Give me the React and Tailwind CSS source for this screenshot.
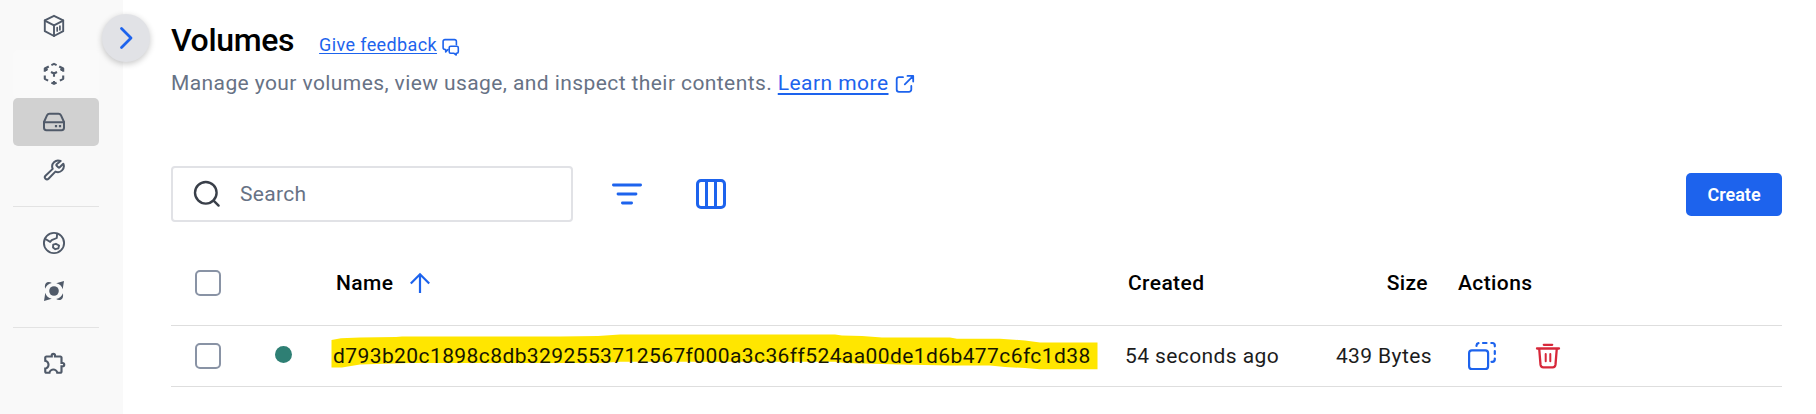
import React from "react";
import { MdOutlineExtension } from "react-icons/md";

const line = {
  fill: "none",
  stroke: "currentColor",
  strokeLinecap: "round",
  strokeLinejoin: "round",
};

function ContainersIcon() {
  return (
    <svg viewBox="0 0 24 24" className="size-6" {...line} strokeWidth="1.9">
      <path d="M12 1.800 21.200 6.400V17.200L12 22 2.800 17.200V6.400Z" />
      <path d="M2.800 6.600 12 11.400 21.200 6.600M12 11.400V22" />
      <path d="M15.200 13.600V17M17.900 12.200V15.800" strokeWidth="1.700" />
    </svg>
  );
}

function ImagesIcon() {
  return (
    <svg viewBox="0 0 24 24" className="size-6" {...line} strokeWidth="2.100" strokeLinecap="butt">
      <path d="M9.400 3.100 12 1.900l2.600 1.200M17.200 4.500l4 2v3.200M2.800 9.700V6.500l4-2M2.800 13.500v3.300l3.300 1.900M21.200 13.500v3.300l-3.300 1.900M9.400 20.600 12 21.900l2.600-1.300M12 19v2.500M18.400 8 21 6.600M5.600 8 3 6.600" />
      <path d="M9 10 12 11.500l3-1.500M12 11.500v3.200" />
    </svg>
  );
}

function VolumesIcon() {
  return (
    <svg viewBox="0 0 24 24" className="size-6" {...line} strokeWidth="2">
      <path d="M2 12 5.100 5.200A2.600 2.600 0 0 1 7.400 3.800h9.200a2.600 2.600 0 0 1 2.300 1.400L22 12v5.800a2.400 2.400 0 0 1-2.400 2.400H4.400A2.400 2.400 0 0 1 2 17.800Z" />
      <path d="M2 12.300h20" />
      <path d="M14 16.200h.01M18 16.200h.01" strokeWidth="2.200" strokeLinecap="square" />
    </svg>
  );
}

function BuildsIcon() {
  return (
    <svg viewBox="0 0 24 24" className="size-6" {...line} strokeWidth="2">
      <path d="M14.700 6.300a1 1 0 0 0 0 1.400l1.600 1.600a1 1 0 0 0 1.400 0l3.600-3.600a6 6 0 0 1-7.900 7.900l-6.900 7.200a2.100 2.100 0 0 1-3-3l7.200-6.900a6 6 0 0 1 7.900-7.900z" />
    </svg>
  );
}

function GlobeIcon() {
  return (
    <svg viewBox="0 0 24 24" className="size-6" {...line} strokeWidth="1.900">
      <circle cx="12" cy="12" r="10.100" />
      <path d="M3 7.800 8.200 10.900l1.500-1.700 5.100-2.200.3-4.300" />
      <path d="m11.200 13.700 2.700-.9 3.200 1.700-.8 2.900-3 .8-2.300-1.800Z" />
    </svg>
  );
}

function ScoutIcon() {
  return (
    <svg viewBox="0 0 24 24" className="size-6" fill="currentColor">
      <circle cx="12" cy="12" r="4.800" />
      <path d="M22 2 20.700 10.300A8.400 8.400 0 0 0 14.200 4.200Z" />
      <path d="M2 22 3.300 13.700A8.400 8.400 0 0 0 9.800 19.800Z" />
      <path d="M3.100 9.800A9 9 0 0 1 9.800 4Q7.700 2.400 5.100 3.200 2.100 5 3.100 9.800Z" />
      <path d="M20.900 14.200a9 9 0 0 1-6.700 5.800q2.100 1.600 4.700.8 3-1.800 2-6.600Z" />
    </svg>
  );
}

function NavItem({ children, className = "" }) {
  return (
    <a className={`flex h-12 w-[86px] shrink-0 items-center rounded-[5px] pl-[29px] ${className}`}>
      {children}
    </a>
  );
}

function Sidebar() {
  return (
    <nav className="flex w-[123px] shrink-0 flex-col bg-[#f9f9f9] pt-0.5 pl-[13px] text-[#505a69]">
      <NavItem><ContainersIcon /></NavItem>
      <NavItem className="bg-[#fafafa]"><ImagesIcon /></NavItem>
      <NavItem className="bg-[#d1d1d1]"><VolumesIcon /></NavItem>
      <NavItem><BuildsIcon /></NavItem>
      <hr className="mt-3 mb-3 w-[86px] border-[#e3e3e3]" />
      <NavItem><GlobeIcon /></NavItem>
      <NavItem><ScoutIcon /></NavItem>
      <hr className="mt-3 mb-3 w-[86px] border-[#e3e3e3]" />
      <NavItem><MdOutlineExtension className="-mt-0.5 size-[26px]" /></NavItem>
    </nav>
  );
}

function Heading() {
  return (
    <header>
      <div className="flex h-10 items-end">
        <h1 className="text-[32px] leading-10 font-medium tracking-[-0.350px] text-black">Volumes</h1>
        <a className="ml-[25px] flex items-center gap-[5px] text-[18px] leading-[31px] tracking-[0.380px] text-[#1d63ed]">
          <span className="underline decoration-1 underline-offset-2">Give feedback</span>
          <svg viewBox="0 0 18 18" className="mt-1 size-[18px]" {...line} strokeWidth="1.600">
            <path d="M6 11.500 3.700 14V11.500H3A1.900 1.900 0 0 1 1.100 9.600V3.500A1.900 1.900 0 0 1 3 1.600h9.500a1.900 1.900 0 0 1 1.900 1.900v3.300" />
            <path d="M8.700 8.200h6.100a1.500 1.500 0 0 1 1.500 1.500v4a1.500 1.500 0 0 1-1.500 1.500h-.6V17l-2.500-1.800h-3a1.500 1.500 0 0 1-1.500-1.500v-4a1.500 1.500 0 0 1 1.500-1.500Z" />
          </svg>
        </a>
      </div>
      <p className="mt-2 flex h-8 items-center text-[21px] tracking-[0.410px] whitespace-nowrap text-[#677285]">
        <span className="whitespace-pre">Manage your volumes, view usage, and inspect their contents. </span>
        <a className="flex items-center gap-1.5 text-[#1d63ed]">
          <span className="tracking-[0.450px] underline decoration-2 underline-offset-[3px]">Learn more</span>
          <svg viewBox="0 0 20 20" className="size-5" {...line} strokeWidth="1.800">
            <path d="M8 3.200H4A2.300 2.300 0 0 0 1.700 5.500v10A2.300 2.300 0 0 0 4 17.800h10a2.300 2.300 0 0 0 2.300-2.300V12" />
            <path d="M12.500 1.900h5.700v5.700M18 2.100 9.800 10.300" />
          </svg>
        </a>
      </p>
    </header>
  );
}

function Toolbar() {
  return (
    <div className="flex h-14 items-center">
      <div className="flex h-14 w-[402px] items-center rounded border-2 border-[#e1e2e6] pl-5">
        <svg viewBox="0 0 28 28" className="size-7 text-[#393f49]" {...line} strokeWidth="2.400">
          <circle cx="12.800" cy="12.800" r="10.800" />
          <path d="m20.600 20.600 5 5" />
        </svg>
        <span className="mt-0.5 ml-[19px] text-[21px] tracking-[0.300px] text-[#677285]">Search</span>
      </div>
      <svg viewBox="0 0 32 32" className="ml-[38px] size-8 text-[#1d63ed]" {...line} strokeWidth="2.800">
        <path d="M2.400 7h27.200M7 16h18M11.400 25h9.200" />
      </svg>
      <svg viewBox="0 0 32 32" className="ml-[52px] size-8 text-[#1d63ed]" {...line} strokeWidth="3">
        <rect x="2.500" y="2.500" width="27" height="27" rx="3.500" />
        <path d="M11.500 3v26M20.500 3v26" />
      </svg>
      <button className="ml-auto h-[43px] w-24 rounded-[5px] bg-[#1d63ed] text-[18px] font-semibold text-white">
        Create
      </button>
    </div>
  );
}

function Checkbox() {
  return <span className="ml-6 block size-[26px] rounded-[5px] border-2 border-[#8993a5]" />;
}

const columns = "grid grid-cols-[104px_59px_792px_306px_1fr] items-center whitespace-nowrap border-b border-[#dedede]";

function VolumeTable() {
  return (
    <div className="text-[21px] leading-[30px] tracking-[0.400px]">
      <div className={`${columns} h-[85px] font-medium text-black`}>
        <Checkbox />
        <span />
        <span className="flex items-center gap-4 pl-0.5">
          Name
          <svg viewBox="0 0 22 22" className="size-[22px] text-[#1d63ed]" {...line} strokeLinecap="butt" strokeLinejoin="miter" strokeWidth="2.200">
            <path d="M11 21V2.500M1.800 11.500 11 2.300l9.200 9.200" />
          </svg>
        </span>
        <span className="flex justify-between pr-1 pl-0.5">
          <span>Created</span>
          <span>Size</span>
        </span>
        <span className="pl-[26px]">Actions</span>
      </div>
      <div className={`${columns} h-[61px] text-[#1c1c1c]`}>
        <Checkbox />
        <span className="mb-1 size-[17px] rounded-full bg-[#2e7f74]" />
        <span className="relative -ml-px">
          <svg viewBox="331 330 768 42" className="absolute top-[-11px] left-[-2px] h-[42px] w-[768px]" fill="#ffe600">
            <path d="M331.500 340 341 338.300 360 337.500 396 337 402 336.500H560L598 336 620 334.500H835L842 335.500 862 336 882 337.500H950L957 338.700H1000L1025 340.500 1040 342.500H1097.500V369.300H1040L1025 368 1005 367 990 365.500H950L900 364.500 845 363 835 361.700H620L600 363H410L360 364.500 342 367.500H331.500Z" />
          </svg>
          <span className="relative tracking-[0.410px] text-[#161600]">d793b20c1898c8db3292553712567f000a3c36ff524aa00de1d6b477c6fc1d38</span>
        </span>
        <span className="flex justify-between">
          <span className="-ml-px">54 seconds ago</span>
          <span>439 Bytes</span>
        </span>
        <span className="flex items-center pl-[35px]">
          <svg viewBox="0 0 30 30" className="size-[30px] text-[#1d63ed]" {...line} strokeWidth="2.200">
            <rect x="2.100" y="9.300" width="19" height="18.700" rx="2.800" />
            <path d="M9.500 5V4.500A2.500 2.500 0 0 1 11.500 2.200M16 2h3.500M24.300 2h1a2.500 2.500 0 0 1 2.500 2.500v.8M27.800 10v3M27.800 17.500v.8a2.500 2.500 0 0 1-2.500 2.500h-.8" />
          </svg>
          <svg viewBox="0 0 26 26" className="ml-[38px] size-[26px] text-[#d7283a]" {...line} strokeWidth="2.300">
            <path d="M2 5.500h22M8.800 1.800h8.400M4.200 5.500l1.300 16.200A2.900 2.900 0 0 0 8.400 24.300h9.200a2.900 2.900 0 0 0 2.900-2.600L21.800 5.500" />
            <path d="M10.700 11v7.300M15.300 11v7.300" strokeWidth="2" />
          </svg>
        </span>
      </div>
    </div>
  );
}

export default function App() {
  return (
    <div className="relative flex h-[414px] w-[1816px] overflow-hidden bg-white font-['Roboto',sans-serif]">
      <Sidebar />
      <button className="absolute top-3.5 left-[102px] flex size-12 items-center justify-center rounded-full bg-[#e1e2e6] shadow-[0_2px_6px_rgba(0,0,0,0.22)]">
        <svg viewBox="0 0 24 24" className="size-6 text-[#1d63ed]" {...line} strokeWidth="2.800">
          <path d="m7.500 2.500 9.500 9.500-9.500 9.500" />
        </svg>
      </button>
      <main className="flex min-w-0 flex-1 flex-col pt-5 pr-[34px] pl-12">
        <Heading />
        <div className="mt-[66px]">
          <Toolbar />
        </div>
        <div className="mt-[19px]">
          <VolumeTable />
        </div>
      </main>
    </div>
  );
}
